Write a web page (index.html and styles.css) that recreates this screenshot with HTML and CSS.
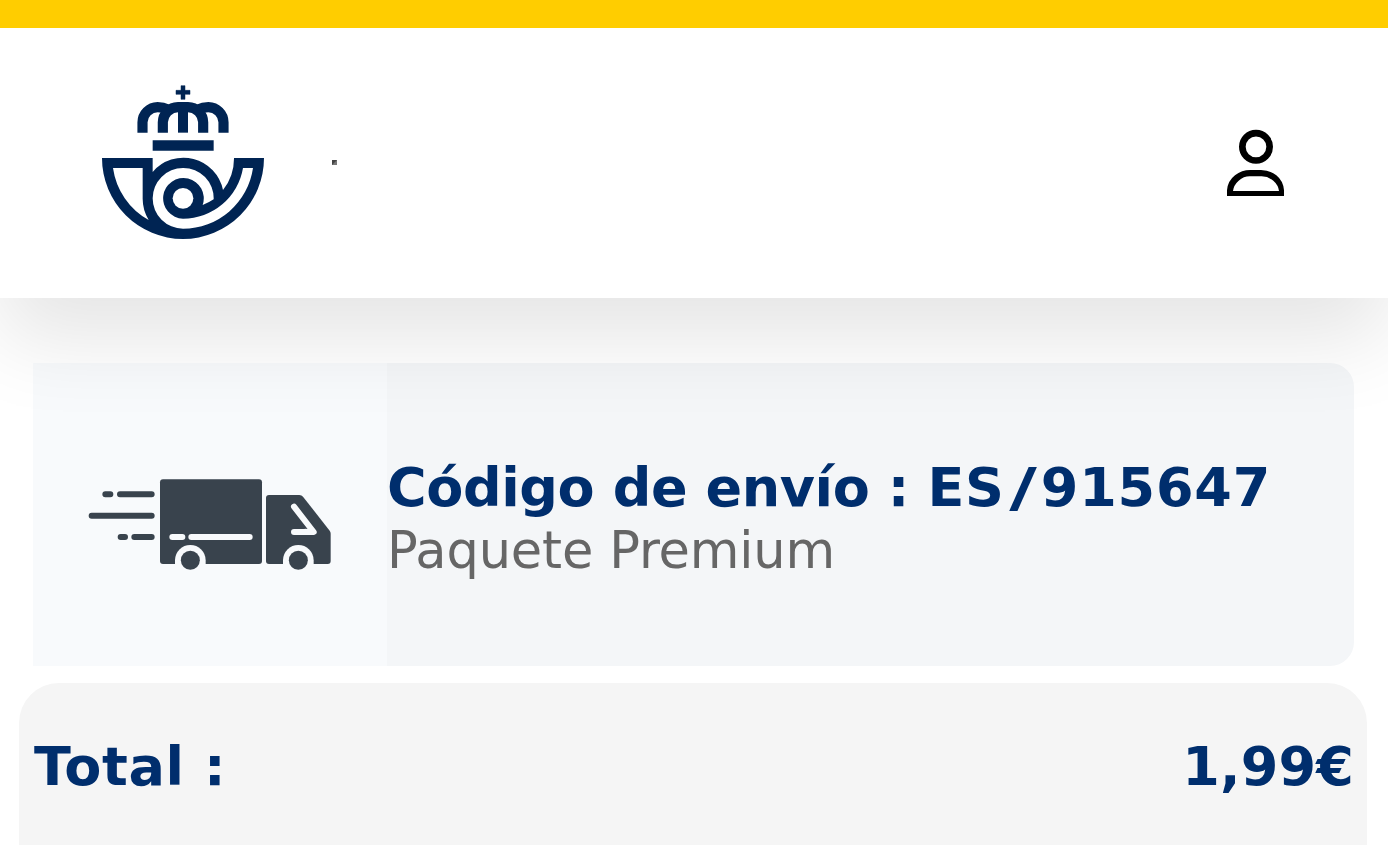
FILE: index.html
```
<!DOCTYPE html>
<html lang="es">
<head>
<meta charset="utf-8">
<title>Código de envío</title>
<link rel="stylesheet" href="styles.css">
</head>
<body>
<header class="header">
  <div class="brand">
    <svg class="logo" viewBox="0 0 570 525" aria-label="Correos">
      <g fill="#002453">
        <path d="M273 32h12v14h15v12h-15v15h-12V58h-15V46h15z" stroke="#002453" stroke-width="1.500"/>
        <path d="M188 196h183v31H188z"/>
        <path d="M264 96h30v77h-30z"/>
        <path fill-rule="evenodd" d="M36 249H188V291A121 121 0 0 1 399 345A153 153 0 0 0 432 249H522A243 243 0 0 1 36 249Z
          M69 279H158V370A121 121 0 0 0 176 435A212 212 0 0 1 69 279Z
          M489 279A212 212 0 0 1 279 461A91 91 0 0 1 279 279A91 91 0 0 1 371 373A153 153 0 0 1 338 390A61 61 0 1 0 279 431A182 182 0 0 0 459 279Z"/>
      </g>
      <circle cx="279" cy="370" r="31" fill="#fff"/>
      <g fill="none" stroke="#002453" stroke-width="30.500">
        <path d="M157.500 173V142A46 46 0 0 1 203 96.500Q220 96.500 232 103"/>
        <path d="M218.500 173V142A46 46 0 0 1 264 96.500H279"/>
        <path d="M400.500 173V142A46 46 0 0 0 355 96.500Q338 96.500 326 103"/>
        <path d="M339.500 173V142A46 46 0 0 0 294 96.500H279"/>
      </g>
    </svg>
    <span class="dot"></span>
  </div>
  <svg class="user" viewBox="0 0 270 285" aria-label="Usuario">
    <circle cx="138" cy="95.500" r="41" fill="none" stroke="#000" stroke-width="20"/>
    <path fill-rule="evenodd" d="M51 243V226Q53 198 75 181Q95 165 121 165H153Q179 165 199 181Q220 198 222 226V243Z M69 228H207Q205 210 190 197Q174 184 155 184H119Q101 184 86 197Q71 210 69 228Z"/>
  </svg>
</header>
<main class="content">
  <section class="shipment">
    <div class="picture">
      <svg class="truck" viewBox="0 0 780 345" aria-hidden="true">
        <g fill="#39434d">
          <rect x="240" y="43" width="306" height="254" rx="9"/>
          <path d="M567 90H658Q665 90 669 95L749 197Q752 201 752 206V288Q752 297 743 297H567Q558 297 558 288V99Q558 90 567 90Z"/>
        </g>
        <g fill="#f8fafc">
          <path d="M285 298V286A46 46 0 0 1 377 286V298Z"/>
          <path d="M609 298V286A46 46 0 0 1 701 286V298Z"/>
        </g>
        <g fill="#39434d">
          <circle cx="331" cy="286" r="28.500"/>
          <circle cx="655" cy="286" r="28.500"/>
        </g>
        <g fill="none" stroke-width="18" stroke-linecap="round">
          <path stroke="#39434d" d="M76 88H91M120 88H215M35 152H215M122 216H135M163 216H215"/>
          <path stroke="#f8fafc" d="M277 216H307M334 216H509"/>
          <path stroke="#f8fafc" stroke-linejoin="round" d="M642 125L701 201H642"/>
          <path fill="#f8fafc" d="M674 191L686 192L690 180L700 201H680Z"/>
        </g>
      </svg>
    </div>
    <div class="details">
      <h1 class="code">Código de envío : <span class="number">ES<span class="slash">/</span>915647</span></h1>
      <p class="service">Paquete Premium</p>
    </div>
  </section>
  <section class="total">
    <span class="label">Total :</span>
    <span class="price">1,99€</span>
  </section>
</main>
</body>
</html>
```
FILE: styles.css
```
* {
  box-sizing: border-box;
}

body {
  margin: 0;
  height: 862px;
  overflow: hidden;
  background: #fff;
  font-family: Verdana, "DejaVu Sans", sans-serif;
}

.header {
  position: relative;
  z-index: 1;
  display: flex;
  justify-content: space-between;
  align-items: center;
  height: 298px;
  padding: 0 88px 1px 90px;
  border-top: 28px solid #ffcd00;
  background: #fff;
  box-shadow: 0 40px 80px rgba(0, 0, 0, 0.106);
}

.brand {
  display: flex;
  align-items: center;
  gap: 52px;
}

.logo {
  width: 190px;
  height: 175px;
}

.dot {
  width: 5px;
  height: 5px;
  background: linear-gradient(135deg, #444 45%, #777 55%);
}

.user {
  width: 90px;
  height: 95px;
}

.content {
  padding: 65px 21px 0 19px;
}

.shipment {
  display: flex;
  height: 303px;
  margin: 0 13px 0 14px;
  overflow: hidden;
  border-radius: 0 24px 24px 0;
  background: #f4f6f8;
}

.picture {
  flex: none;
  display: flex;
  align-items: center;
  width: 354px;
  padding: 16px 0 0 47px;
  background: #f8fafc;
}

.truck {
  width: 260px;
  height: 115px;
}

.details {
  display: flex;
  flex-direction: column;
  justify-content: center;
  padding-top: 9px;
  white-space: nowrap;
}

.code {
  margin: 0;
  color: #002e6d;
  font-size: 54px;
  font-weight: 700;
  line-height: 63px;
  letter-spacing: -0.4px;
}

.number {
  letter-spacing: 0.8px;
}

.slash {
  display: inline-block;
  width: 36px;
  letter-spacing: 0;
  text-align: center;
  transform: scaleX(1.4);
}

.service {
  margin: 0;
  color: #666;
  font-size: 51px;
  line-height: 64px;
  letter-spacing: -0.15px;
}

.total {
  display: flex;
  justify-content: space-between;
  align-items: center;
  height: 162px;
  margin-top: 17px;
  padding: 5px 13px 0 15px;
  border-radius: 40px 40px 0 0;
  background: #f5f5f5;
  color: #002e6d;
  font-size: 54px;
  font-weight: 700;
  line-height: 63px;
}

.label {
  letter-spacing: 0.6px;
}

.price {
  letter-spacing: 0.2px;
}
```
